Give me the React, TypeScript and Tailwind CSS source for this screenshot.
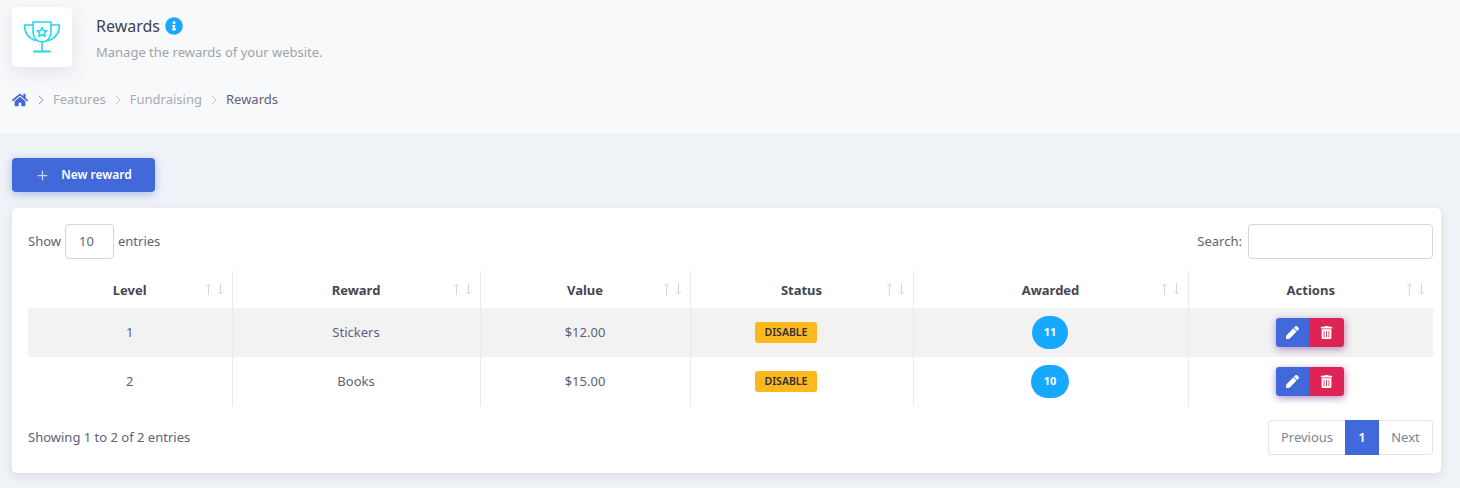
import React from 'react'
import { ChevronRight, Plus } from 'lucide-react'
import { FaHome, FaInfoCircle, FaPen, FaTrashAlt } from 'react-icons/fa'

type Row = { level: number, reward: string, value: string, awarded: number, badge: string }

const rows: Row[] = [
  { level: 1, reward: 'Stickers', value: '$12.00', awarded: 11, badge: 'w-[36px]' },
  { level: 2, reward: 'Books', value: '$15.00', awarded: 10, badge: 'w-[38px]' },
]

const columns = [
  { title: 'Level', width: 'w-[204px]' },
  { title: 'Reward', width: 'w-[248px]' },
  { title: 'Value', width: 'w-[210px]' },
  { title: 'Status', width: 'w-[223px]' },
  { title: 'Awarded', width: 'w-[275px]' },
  { title: 'Actions', width: 'w-[245px]' },
]

function Trophy(){
  return (
    <svg width="38" height="36" viewBox="0 0 38 36" fill="none" stroke="#22dbe8" strokeWidth="1.6" strokeLinejoin="round" strokeLinecap="round">
      <path d="M10 3h18v10c0 6-4 10-9 10s-9-4-9-10z" />
      <path d="M10 6H1.500c0 8 3.500 13 11 15.500" />
      <path d="M28 6h8.500c0 8-3.500 13-11 15.500" />
      <path d="M19 23v9" />
      <path d="M11 32.500h16" strokeWidth="2" />
      <path d="M19 8.500l1.500 3 3.300.4-2.400 2.200.6 3.200-3-1.600-3 1.600.6-3.200-2.400-2.200 3.300-.4z" />
    </svg>
  )
}

function SortArrows(){
  return (
    <span className="absolute right-[8px] top-[12px] flex gap-[5px] text-[#d4d6da]">
      <svg width="7" height="12" viewBox="0 0 7 12" fill="none" stroke="currentColor"><path d="M3.500 12V1M1 3.500l2.500-2.500 2.500 2.500" /></svg>
      <svg width="7" height="12" viewBox="0 0 7 12" fill="none" stroke="currentColor"><path d="M3.500 0v11M1 8.500l2.500 2.500 2.500-2.500" /></svg>
    </span>
  )
}

export default function App(){
  return (
    <div className="h-[488px] overflow-hidden bg-[#eff2f6] font-['Noto_Sans',sans-serif] text-[13px] text-[#5e6278]">
      <header className="h-[134px] bg-[#f8f9fb] pl-[12px] pt-[7px]">
        <div className="flex h-[60px]">
          <div className="flex w-[60px] items-center justify-center rounded-[5px] bg-white shadow-[0_5px_20px_rgba(100,110,130,0.16)]">
            <Trophy />
          </div>
          <div className="ml-[24px]">
            <div className="mt-[8px] flex h-[22px] items-center gap-[5px]">
              <h1 className="text-[16px] text-[#3f4254]">Rewards</h1>
              <FaInfoCircle className="text-[18px] text-[#17a9ff]" />
            </div>
            <p className="mt-[6px] text-[13px] leading-[18px] text-[#a1a3a8]">Manage the rewards of your website.</p>
          </div>
        </div>
        <nav className="mt-[24px] flex h-[18px] items-center text-[13px] text-[#a9abb0]">
          <FaHome className="text-[16px] text-[#4169d9]" />
          <ChevronRight size={16} strokeWidth={1.2} className="ml-[5px] mr-[4px] text-[#7e8299]" />
          <span>Features</span>
          <ChevronRight size={16} strokeWidth={1.2} className="mx-[4px] text-[#b5b7bd]" />
          <span>Fundraising</span>
          <ChevronRight size={16} strokeWidth={1.2} className="mx-[4px] text-[#b5b7bd]" />
          <span className="text-[#5e6278]">Rewards</span>
        </nav>
      </header>

      <main className="px-[12px] pt-[24px] pr-[19px]">
        <button className="flex h-[34px] w-[143px] items-center justify-center gap-[11px] rounded-[4px] bg-[#4169d9] text-[12px] font-semibold text-white shadow-[0_2px_8px_rgba(65,105,217,0.4)]">
          <Plus size={15} strokeWidth={2} className="text-[#c9d4f5]" />
          New reward
        </button>

        <section className="mt-[16px] h-[265px] rounded-[5px] bg-white pl-[16px] pr-[8px] pt-[16px] shadow-[0_3px_10px_rgba(100,110,130,0.16)]">
          <div className="flex h-[35px] items-center justify-between">
            <div className="flex items-center gap-[4px]">
              <span>Show</span>
              <div className="flex h-[35px] w-[49px] items-center justify-center rounded-[4px] border border-[#d3d6dd]">
                <span className="mr-[6px]">10</span>
              </div>
              <span>entries</span>
            </div>
            <label className="flex items-center gap-[6px]">
              Search:
              <input className="h-[35px] w-[185px] rounded-[4px] border border-[#d3d6dd] bg-white" />
            </label>
          </div>

          <table className="mt-[12px] w-[1405px] table-fixed border-collapse text-center">
            <thead>
              <tr className="h-[37px]">
                {columns.map((c, i) => (
                  <th key={c.title} className={`relative ${c.width} pt-[2px] font-bold text-[#44474f] ${i < 5 ? 'border-r border-[#e9eaed]' : ''}`}>
                    {c.title}
                    <SortArrows />
                  </th>
                ))}
              </tr>
            </thead>
            <tbody>
              {rows.map((r, i) => (
                <tr key={r.level} className={`h-[49px] ${i === 0 ? 'bg-[#f2f2f2]' : ''}`}>
                  <td className="border-r border-[#e9eaed]">{r.level}</td>
                  <td className="border-r border-[#e9eaed]">{r.reward}</td>
                  <td className="border-r border-[#e9eaed]">{r.value}</td>
                  <td className="border-r border-[#e9eaed]">
                    <span className="ml-[-31px] inline-flex h-[21px] w-[62px] items-center justify-center rounded-[3px] bg-[#fbb91f] text-[10.500px] font-semibold text-[#2f3037]">DISABLE</span>
                  </td>
                  <td className="border-r border-[#e9eaed]">
                    <span className={`ml-[-1px] inline-flex h-[33px] ${r.badge} items-center justify-center rounded-full bg-[#17a9ff] text-[11px] font-bold text-white`}>{r.awarded}</span>
                  </td>
                  <td>
                    <div className="flex justify-center">
                      <div className="ml-[-2px] flex h-[29px] w-[68px] overflow-hidden rounded-[3px] shadow-[-1px_2px_7px_rgba(65,105,217,0.35),2px_2px_7px_rgba(222,36,84,0.35)]">
                        <span className="flex w-[33px] items-center justify-center bg-[#4169d9] text-white"><FaPen size={13} /></span>
                        <span className="flex w-[35px] items-center justify-center bg-[#de2454] text-white"><FaTrashAlt size={13} /></span>
                      </div>
                    </div>
                  </td>
                </tr>
              ))}
            </tbody>
          </table>

          <div className="mt-[14px] flex h-[35px] items-center justify-between">
            <span>Showing 1 to 2 of 2 entries</span>
            <div className="flex h-[35px] text-[#7e8299]">
              <span className="flex w-[77px] items-center justify-center rounded-l-[4px] border border-r-0 border-[#e3e5ea]">Previous</span>
              <span className="flex w-[34px] items-center justify-center bg-[#4169d9] font-semibold text-white">1</span>
              <span className="flex w-[54px] items-center justify-center rounded-r-[4px] border border-l-0 border-[#e3e5ea]">Next</span>
            </div>
          </div>
        </section>
      </main>
    </div>
  )
}
